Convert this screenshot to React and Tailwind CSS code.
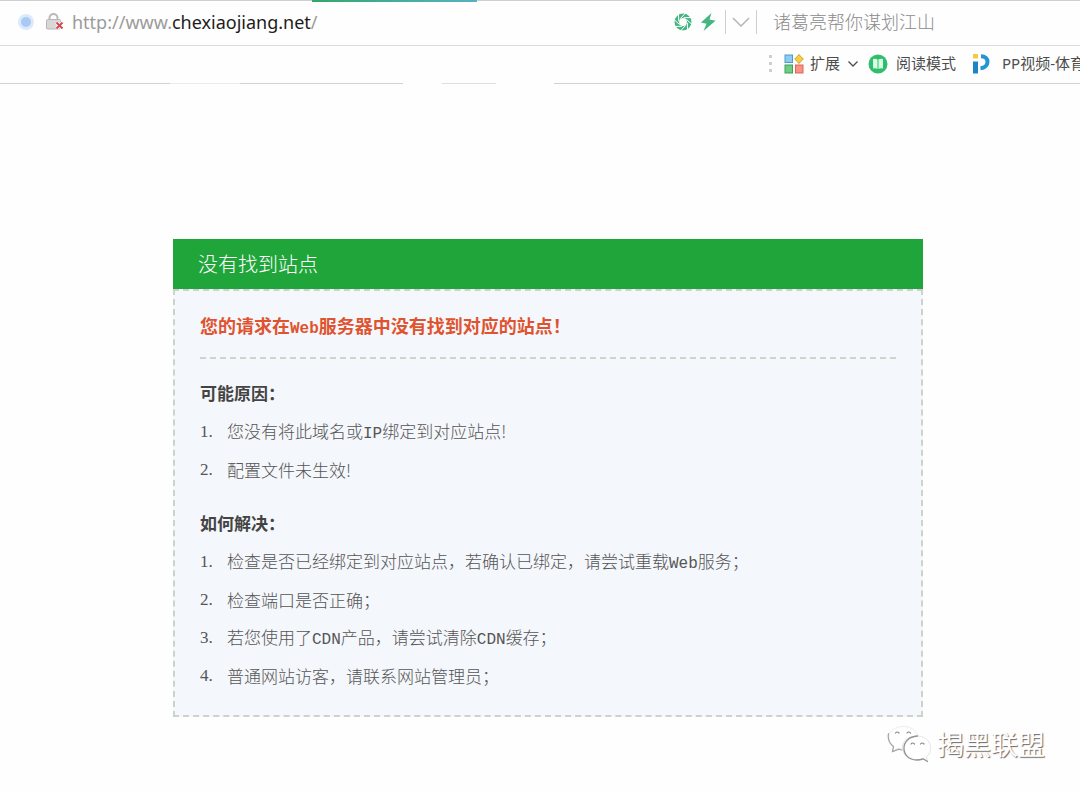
import React from 'react';

const causes = [
  <>您没有将此域名或<Latin>IP</Latin>绑定到对应站点!</>,
  <>配置文件未生效!</>,
];

const solutions = [
  <>检查是否已经绑定到对应站点，若确认已绑定，请尝试重载<Latin>Web</Latin>服务；</>,
  <>检查端口是否正确；</>,
  <>若您使用了<Latin>CDN</Latin>产品，请尝试清除<Latin>CDN</Latin>缓存；</>,
  <>普通网站访客，请联系网站管理员；</>,
];

function Latin({ children }) {
  return <span className="font-['Liberation_Mono',monospace] text-[16px]">{children}</span>;
}

const LockIcon = () => (
  <svg className="h-5 w-5" viewBox="0 0 20 20" fill="none">
    <path d="M4.500 8V6a4 4 0 0 1 8 0v2" stroke="#b9b9b9" strokeWidth="2" />
    <rect x="1.500" y="7.500" width="14" height="9.500" rx="1" fill="#d8d6d6" stroke="#b8b6b6" />
    <path d="M11.500 10.500l6 6M17.500 10.500l-6 6" stroke="#fff" strokeWidth="3.500" />
    <path d="M11.500 10.500l6 6M17.500 10.500l-6 6" stroke="#d14b55" strokeWidth="2" />
  </svg>
);

const ShutterIcon = () => (
  <svg className="h-[18px] w-[18px]" viewBox="0 0 18 18" fill="none">
    <circle cx="9" cy="9" r="6.200" stroke="#45b581" strokeWidth="4.600" />
    {[0, 45, 90, 135, 180, 225, 270, 315].map((a) => (
      <path key={a} d="M6.500 5.500L11.500 0" stroke="#fff" strokeWidth="1" transform={`rotate(${a} 9 9)`} />
    ))}
  </svg>
);

const BoltIcon = () => (
  <svg className="h-5 w-4" viewBox="0 0 16 20">
    <path d="M11.500 1L1 10.500l5.500 1.200L3.500 19 15.500 8.800l-6-1.300z" fill="#45b581" />
  </svg>
);

const Chevron = ({ className }) => (
  <svg className={className} viewBox="0 0 18 10" fill="none">
    <path d="M1 1l8 8 8-8" stroke="currentColor" strokeWidth="1.500" />
  </svg>
);

const SmallChevron = ({ className }) => (
  <svg className={className} viewBox="0 0 10 6" fill="none">
    <path d="M.500 .500L5 5l4.500-4.500" stroke="currentColor" strokeWidth="1.300" />
  </svg>
);

const ExtensionIcon = () => (
  <svg className="h-5 w-5" viewBox="0 0 20 20">
    <rect x="1" y="1" width="7.500" height="7.500" fill="#8ccbf2" stroke="#4c9dcc" />
    <path d="M15 .500l1.500 1.700 2.800 2.800-2.800 2.800L15 9.500l-1.500-1.700L10.700 5l2.800-2.800z" fill="#f7cd46" stroke="#c9a02e" />
    <rect x="1" y="11" width="7.500" height="8" fill="#6fcd85" stroke="#3f9e58" />
    <rect x="11.500" y="11" width="7.500" height="8" fill="#fb9283" stroke="#d9675b" />
  </svg>
);

const ReaderIcon = () => (
  <svg className="h-5 w-5" viewBox="0 0 20 20">
    <circle cx="10" cy="10" r="9.500" fill="#2fbf6c" />
    <path d="M5 5q2.500-.7 4.500 .5v9.500q-2-1.200-4.500-.5zM15 5q-2.500-.7-4.500 .5v9.500q2-1.200 4.500-.5z" fill="#d9ffe6" />
  </svg>
);

const PPIcon = () => (
  <svg className="h-5 w-[18px]" viewBox="0 0 18 20" fill="none">
    <rect x="1" y="0" width="5" height="4.500" fill="#f6c944" />
    <path d="M1 7.500h5V19.500h-5z" fill="#1c86c4" />
    <path d="M9 2.200c4 0 6.500 2.400 6.500 5.500s-2.500 6.200-7 6.500" stroke="#2196d3" strokeWidth="4" />
  </svg>
);

const WeChatIcon = () => (
  <svg className="h-10 w-11" viewBox="0 0 44 40" fill="none" strokeLinecap="round">
    <path d="M18 25q-3 .5-6-.8L5.500 27.500l1-5C-3 14 3 3 15.500 2.500 24 2 30 7 30.500 12" fill="#fff" stroke="#eeecec" />
    <path d="M1.500 9.500c-1 5 .5 9.500 5 13l-1 5 6.500-2.300q3 1 5 .3" stroke="#a5a1a1" strokeWidth="1.200" />
    <path d="M30.500 12C8 12 13 37 30 36q3 0 6-1.200l4.500 2.700-1.200-4.500C48 26 43 12 30.500 12z" fill="#fff" stroke="#e6e4e4" />
    <path d="M30.500 12C12 13 13 36 30 36q3 0 6-1.200l4.500 2.700" stroke="#979393" strokeWidth="1.300" />
    <path d="M8.500 9q1.500-2 3.500 0M20 9q1.500-2 3.500 0M24 20q1.500-2 3.500 0M33.500 20q1.500-2 3.500 0" stroke="#8c8888" strokeWidth="1.200" />
  </svg>
);

const AddressBar = () => (
  <div className="flex h-[45px] items-center border-b border-[#dcdcdc] pb-[2px] pl-[18px]">
    <span className="h-4 w-4 rounded-full border-3 border-[#dce9fb] bg-[#a9c9f5]" />
    <span className="ml-[11px]"><LockIcon /></span>
    <div role="textbox" aria-label="地址" className="ml-[7px] flex-1 text-[18px] text-[#9b9b9b]">
      http://www.<span className="text-[#1c1c1c]">chexiaojiang.net</span>/
    </div>
    <div className="flex w-[406px] shrink-0 items-center">
      <button aria-label="兼容模式"><ShutterIcon /></button>
      <button aria-label="极速模式" className="ml-2"><BoltIcon /></button>
      <button aria-label="展开" className="ml-[9px] flex h-6 w-8 items-center justify-center border-x border-[#cfcfcf] text-[#b5b5b5]">
        <Chevron className="h-[10px] w-[18px]" />
      </button>
      <input
        type="text"
        aria-label="搜索"
        placeholder="诸葛亮帮你谋划江山"
        className="ml-4 min-w-0 flex-1 text-[18px] font-light outline-none placeholder:text-[#8a8a8a]"
      />
    </div>
  </div>
);

const Toolbar = () => (
  <div className="flex h-[37px] items-center justify-end overflow-hidden pb-[2px] text-[15px] whitespace-nowrap text-[#4d4d4d]">
    <div className="flex w-[311px] shrink-0 items-center">
      <span className="flex w-[3px] shrink-0 flex-col gap-1">
        <i className="h-[3px] bg-[#cfcfcf]" />
        <i className="h-[3px] bg-[#cfcfcf]" />
        <i className="h-[3px] bg-[#cfcfcf]" />
      </span>
      <button className="ml-3 flex shrink-0 items-center">
        <ExtensionIcon />
        <span className="ml-[6px]">扩展</span>
        <SmallChevron className="ml-2 h-[6px] w-[10px]" />
      </button>
      <button className="ml-[10px] flex shrink-0 items-center">
        <ReaderIcon />
        <span className="ml-2">阅读模式</span>
      </button>
      <a href="#pp" className="ml-4 flex shrink-0 items-center">
        <PPIcon />
        <span className="ml-3">PP视频-体育</span>
      </a>
    </div>
  </div>
);

// the rule under the toolbar is worn away in places
const ToolbarRule = () => (
  <div className="flex h-px">
    <i className="w-[170px] bg-[#d2d2d2]" />
    <i className="w-[70px] bg-[#ebebeb]" />
    <i className="w-[163px] bg-[#d2d2d2]" />
    <i className="w-[39px]" />
    <i className="w-[54px] bg-[#dedede]" />
    <i className="w-[58px]" />
    <i className="flex-1 bg-[#d2d2d2]" />
  </div>
);

const Section = ({ title, items }) => (
  <section>
    <h2 className="text-[17px] leading-[40px] font-bold text-[#444]">{title}</h2>
    <ol className="text-[17px] font-light text-[#555]">
      {items.map((item, i) => (
        <li key={i} className="flex h-[38px] items-center">
          <span className="w-[27px] font-['Liberation_Serif',serif]">{i + 1}.</span>
          <span>{item}</span>
        </li>
      ))}
    </ol>
  </section>
);

const App = () => {
  return (
    <div className="relative min-h-screen bg-[#fefefe] font-['Noto_Sans','Noto_Sans_CJK_SC',sans-serif]">
      <header>
        <div className="flex h-px bg-[#d0d0d0] pl-[312px]">
          <i className="h-[2px] w-[165px] bg-linear-to-r from-[#35a66b] to-[#56b2c4]" />
        </div>
        <AddressBar />
        <Toolbar />
        <ToolbarRule />
      </header>

      <main className="pt-[155px] pb-[75px] pl-4 font-['Noto_Sans_CJK_SC',sans-serif]">
        <div className="mx-auto max-w-[750px]">
          <h1 className="bg-[#20a53a] px-[25px] text-[20px] leading-[50px] font-light text-white">没有找到站点</h1>
          <div className="border-2 border-dashed border-[#cbd3cb] bg-[#f4f7fb] px-[25px] pb-5">
            <p className="border-b-2 border-dashed border-[#cbd6cb] pt-5 pb-[14px] text-[18px] leading-[28px] font-bold text-[#e0532f]">
              您的请求在<Latin>Web</Latin>服务器中没有找到对应的站点！
            </p>
            <div className="mt-[14px] flex flex-col gap-[14px]">
              <Section title="可能原因：" items={causes} />
              <Section title="如何解决：" items={solutions} />
            </div>
          </div>
        </div>
      </main>

      <div className="absolute right-[35px] bottom-[28px] flex items-center gap-[6px] font-['Noto_Sans_CJK_SC',sans-serif]">
        <WeChatIcon />
        <span className="text-[27px] leading-[40px] text-white [text-shadow:1px_1px_1px_#6b6767]">揭黑联盟</span>
      </div>
    </div>
  );
};

export default App;
